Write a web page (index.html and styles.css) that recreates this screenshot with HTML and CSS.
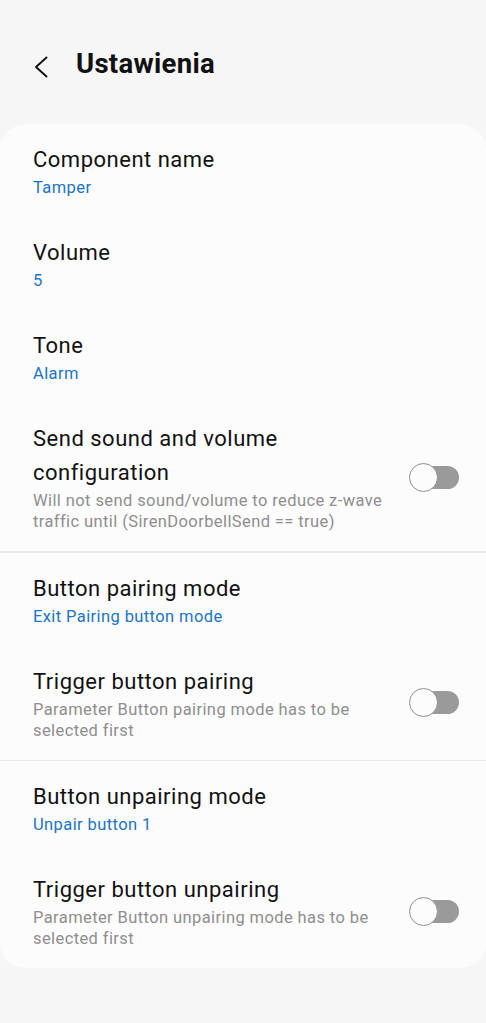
FILE: index.html
```html
<!DOCTYPE html>
<html lang="pl">
<head>
<meta charset="utf-8">
<link rel="stylesheet" href="styles.css">
</head>
<body>
<header class="appbar">
  <svg class="back" width="14" height="22" viewBox="0 0 14 22"><path d="M12.5 1.5 L2 11 L12.5 20.5" fill="none" stroke="#111" stroke-width="1.9" stroke-linecap="round" stroke-linejoin="round"/></svg>
  <h1 class="title">Ustawienia</h1>
</header>
<main class="card">
  <div class="row">
    <div class="text"><div class="name">Component name</div><div class="value">Tamper</div></div>
  </div>
  <div class="row">
    <div class="text"><div class="name">Volume</div><div class="value">5</div></div>
  </div>
  <div class="row">
    <div class="text"><div class="name">Tone</div><div class="value">Alarm</div></div>
  </div>
  <div class="row">
    <div class="text"><div class="name">Send sound and volume configuration</div><div class="desc">Will not send sound/volume to reduce z-wave traffic until (SirenDoorbellSend == true)</div></div>
    <span class="switch"><span class="knob"></span></span>
  </div>
  <div class="divider"></div>
  <div class="row">
    <div class="text"><div class="name">Button pairing mode</div><div class="value">Exit Pairing button mode</div></div>
  </div>
  <div class="row">
    <div class="text"><div class="name">Trigger button pairing</div><div class="desc">Parameter Button pairing mode has to be selected first</div></div>
    <span class="switch"><span class="knob"></span></span>
  </div>
  <div class="divider"></div>
  <div class="row">
    <div class="text"><div class="name">Button unpairing mode</div><div class="value">Unpair button 1</div></div>
  </div>
  <div class="row">
    <div class="text"><div class="name">Trigger button unpairing</div><div class="desc">Parameter Button unpairing mode has to be selected first</div></div>
    <span class="switch"><span class="knob"></span></span>
  </div>
</main>
</body>
</html>
```
FILE: styles.css
```css
* { box-sizing: border-box; }
html, body { margin: 0; padding: 0; }
body {
  background: #f6f6f6;
  font-family: Roboto, "Noto Sans", sans-serif;
  color: #111;
  width: 486px;
  height: 1023px;
  overflow: hidden;
}
.appbar {
  height: 124px;
  display: flex;
  align-items: flex-start;
  padding: 44px 0 0 34px;
  gap: 28px;
}
.back { margin-top: 12px; }
.title {
  margin: 0;
  font-size: 27.5px;
  font-weight: 700;
  letter-spacing: 0.3px;
  line-height: 40px;
  color: #111;
}
.card {
  background: #fcfcfc;
  border-radius: 26px;
  padding: 0;
}
.row {
  display: flex;
  align-items: center;
  padding: 19px 26px 19px 33px;
  gap: 16px;
}
.text { flex: 1; min-width: 0; }
.name {
  font-size: 22px;
  letter-spacing: 0.5px;
  line-height: 34px;
  color: #111;
}
.value {
  font-size: 16.5px;
  letter-spacing: 0.4px;
  line-height: 21px;
  color: #1b74c5;
}
.desc {
  font-size: 16.5px;
  letter-spacing: 0.4px;
  line-height: 21px;
  color: #8e8e8e;
}
.divider {
  height: 1.5px;
  background: #e9e9e9;
}
.switch {
  position: relative;
  width: 51px;
  height: 29px;
  flex: none;
  display: flex;
  align-items: center;
}
.switch::before {
  content: "";
  position: absolute;
  left: 10px;
  right: 1px;
  top: 3px;
  bottom: 3px;
  border-radius: 12px;
  background: #9a9a9a;
}
.knob {
  position: relative;
  width: 29px;
  height: 29px;
  border-radius: 50%;
  background: #fcfcfc;
  border: 1.8px solid #8f8f8f;
}
```
